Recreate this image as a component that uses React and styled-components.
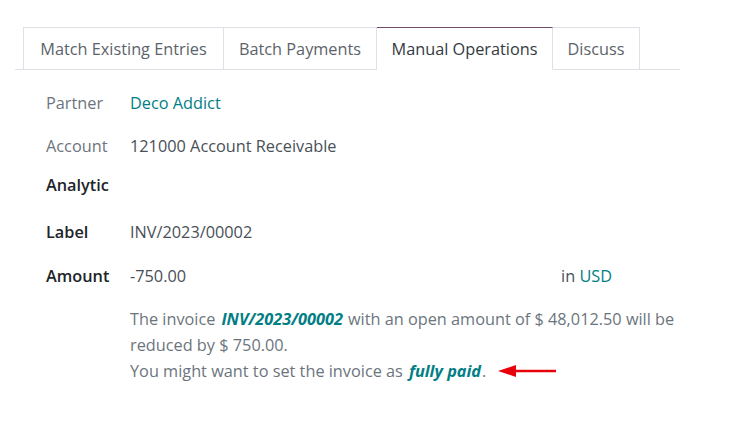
import React from "react";
import styled, { createGlobalStyle } from "styled-components";

const Global = createGlobalStyle`
  html, body { margin: 0; padding: 0; background: #fff; }
  body { font-family: "Open Sans", "Noto Sans", sans-serif; font-size: 16.3px; color: #495057; }
`;

const Page = styled.div`
  width: 755px;
  height: 425px;
  padding: 27px 0 0 15px;
  box-sizing: border-box;
`;

const TabBar = styled.div`
  display: flex;
  width: 665px;
  border-bottom: 1px solid #dee2e6;
  padding-left: 8px;
  box-sizing: border-box;
`;

const Tab = styled.div`
  height: 43px;
  display: flex;
  align-items: center;
  justify-content: center;
  box-sizing: border-box;
  border: 1px solid #dee2e6;
  border-left-width: ${(p) => (p.$first ? "1px" : "0")};
  border-top-color: ${(p) => (p.$active ? "#714b67" : "#dee2e6")};
  border-bottom-color: ${(p) => (p.$active ? "#fff" : "#dee2e6")};
  background: #fff;
  margin-bottom: -1px;
  color: ${(p) => (p.$active ? "#343a40" : "#5c636a")};
  font-size: 16.3px;
  width: ${(p) => p.$w}px;
  white-space: nowrap;
`;

const Form = styled.div`
  padding-left: 31px;
  margin-top: 23px;
  display: grid;
  grid-template-columns: 84px 1fr;
  line-height: 20px;
`;

const Label = styled.div`
  height: ${(p) => p.$h}px;
  font-weight: ${(p) => (p.$bold ? 600 : 400)};
  color: ${(p) => (p.$bold ? "#212529" : "#6c757d")};
  white-space: nowrap;
`;

const Value = styled.div`
  height: ${(p) => p.$h}px;
  color: #495057;
  display: flex;
  white-space: nowrap;
`;

const Link = styled.span`
  color: #017e84;
`;

const Spacer = styled.div`
  width: ${(p) => p.$w}px;
`;

const Note = styled.div`
  grid-column: 2;
  color: #6c757d;
  line-height: 26px;
`;

const NoteLine = styled.div`
  white-space: nowrap;
  display: flex;
  align-items: center;
`;

const EmLink = styled.span`
  color: #017e84;
  font-weight: 700;
  font-style: italic;
  margin: 0 ${(p) => (p.$tight ? "1px" : "5px")} 0 6px;
`;

const ArrowWrap = styled.span`
  display: inline-flex;
  margin-left: 12px;
`;

export default function App() {
  return (
    <>
      <Global />
      <Page>
        <TabBar>
          <Tab $first $w={201}>Match Existing Entries</Tab>
          <Tab $w={153}>Batch Payments</Tab>
          <Tab $active $w={176}>Manual Operations</Tab>
          <Tab $w={87}>Discuss</Tab>
        </TabBar>
        <Form>
          <Label $h={43}>Partner</Label>
          <Value $h={43}><Link>Deco Addict</Link></Value>
          <Label $h={39}>Account</Label>
          <Value $h={39}>121000 Account Receivable</Value>
          <Label $bold $h={47}>Analytic</Label>
          <Value $h={47} />
          <Label $bold $h={44}>Label</Label>
          <Value $h={44}>INV/2023/00002</Value>
          <Label $bold $h={40}>Amount</Label>
          <Value $h={40}>
            -750.00
            <Spacer $w={375} />
            in&nbsp;<Link>USD</Link>
          </Value>
          <Note>
            <NoteLine>
              <span>The invoice</span>
              <EmLink>INV/2023/00002</EmLink>
              <span>with an open amount of $ 48,012.50 will be</span>
            </NoteLine>
            <NoteLine>reduced by $ 750.00.</NoteLine>
            <NoteLine>
              <span>You might want to set the invoice as</span>
              <EmLink $tight>fully paid</EmLink>
              <span>.</span>
              <ArrowWrap>
                <svg width="60" height="14" viewBox="0 0 60 14">
                  <line x1="14" y1="7" x2="58" y2="7" stroke="#e8000b" strokeWidth="2.5" />
                  <polygon points="0,7 18,1 18,13" fill="#e8000b" />
                </svg>
              </ArrowWrap>
            </NoteLine>
          </Note>
        </Form>
      </Page>
    </>
  );
}
